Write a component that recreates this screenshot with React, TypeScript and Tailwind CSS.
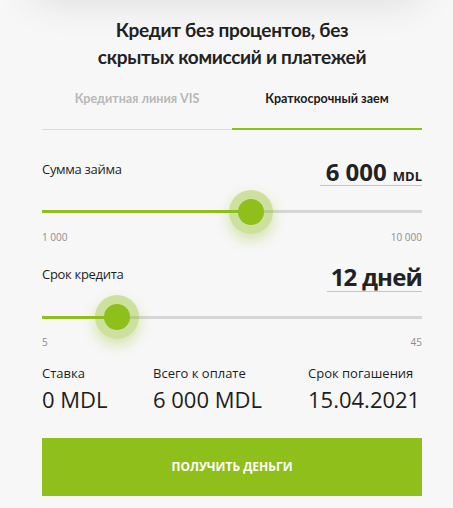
import React from 'react'

function Slider({ pct, min, max }: { pct: number; min: string; max: string }) {
  return (
    <div>
      <div className="relative h-[44px] flex items-center">
        <div className="w-full h-[3px] bg-[#d6d6d6] flex">
          <div className="h-full bg-[#8fbf1a]" style={{ width: `${pct}%` }} />
        </div>
        <div
          className="absolute top-1/2 -translate-x-1/2 -translate-y-1/2 w-[44px] h-[44px] rounded-full bg-[rgba(143,191,26,0.4)] shadow-[0_6px_14px_rgba(143,191,26,0.35)] flex items-center justify-center"
          style={{ left: `${pct}%` }}
        >
          <div className="w-[26px] h-[26px] rounded-full bg-[#8fbf1a]" />
        </div>
      </div>
      <div className="flex justify-between text-[10px] text-[#8c8c8c] leading-none -mt-[2px]">
        <span>{min}</span>
        <span>{max}</span>
      </div>
    </div>
  )
}

export default function App() {
  return (
    <div className="w-[453px] h-[508px] bg-[#f7f7f7] overflow-hidden relative text-[#1e1e1e]" style={{ fontFamily: "'Open Sans', 'Noto Sans', sans-serif" }}>
      <div className="absolute -top-[40px] left-[30px] right-[30px] h-[40px] rounded-[20px] shadow-[0_0_40px_rgba(0,0,0,0.12)] bg-[#f7f7f7]" />
      <div className="ml-[42px] w-[380px] pt-[16px]">
        <h1 className="text-center text-[19px] leading-[27px] font-bold text-[#222] tracking-[-0.3px]" style={{ fontFamily: "Lato, 'Open Sans', sans-serif" }}>
          Кредит без процентов, без<br />скрытых комиссий и платежей
        </h1>

        <div className="mt-[20px] grid grid-cols-2 text-[12.5px] font-bold" style={{ fontFamily: "Lato, 'Open Sans', sans-serif" }}>
          <div className="text-center text-[#b8b8b8] pb-[20px] border-b border-[#dcdcdc]">Кредитная линия VIS</div>
          <div className="text-center text-[#1a1a1a] pb-[19px] border-b-[2px] border-[#8fbf1a]">Краткосрочный заем</div>
        </div>

        <div className="mt-[30px] flex items-end justify-between">
          <div className="text-[13px] pb-[6px] tracking-[-0.3px]">Сумма займа</div>
          <div className="border-b border-[#c4c4c4] pl-[6px] pb-[1px] leading-none">
            <span className="text-[24px] font-bold text-[#222]">6 000</span>
            <span className="text-[13px] font-bold ml-[6px]">MDL</span>
          </div>
        </div>
        <div className="mt-[4px]">
          <Slider pct={55} min="1 000" max="10 000" />
        </div>

        <div className="mt-[23px] flex items-end justify-between">
          <div className="text-[13px] pb-[8px] tracking-[-0.3px]">Срок кредита</div>
          <div className="border-b border-[#c4c4c4] pl-[4px] pb-[2px] leading-none">
            <span className="text-[24px] font-bold text-[#222] tracking-[-0.8px]">12 дней</span>
          </div>
        </div>
        <div className="mt-[3px]">
          <Slider pct={19.7} min="5" max="45" />
        </div>

        <div className="mt-[17px] flex">
          <div className="w-[111px]">
            <div className="text-[13px] leading-[18px]">Ставка</div>
            <div className="text-[22px] leading-[30px] mt-[2px]">0 MDL</div>
          </div>
          <div className="w-[155px]">
            <div className="text-[13px] leading-[18px]">Всего к оплате</div>
            <div className="text-[22px] leading-[30px] mt-[2px]">6 000 MDL</div>
          </div>
          <div className="flex-1">
            <div className="text-[13px] leading-[18px]">Срок погашения</div>
            <div className="text-[22px] leading-[30px] mt-[2px]">15.04.2021</div>
          </div>
        </div>

        <button className="mt-[24px] w-full h-[58px] bg-[#8fbf1a] text-white text-[12px] font-bold uppercase">
          Получить деньги
        </button>
      </div>
    </div>
  )
}
